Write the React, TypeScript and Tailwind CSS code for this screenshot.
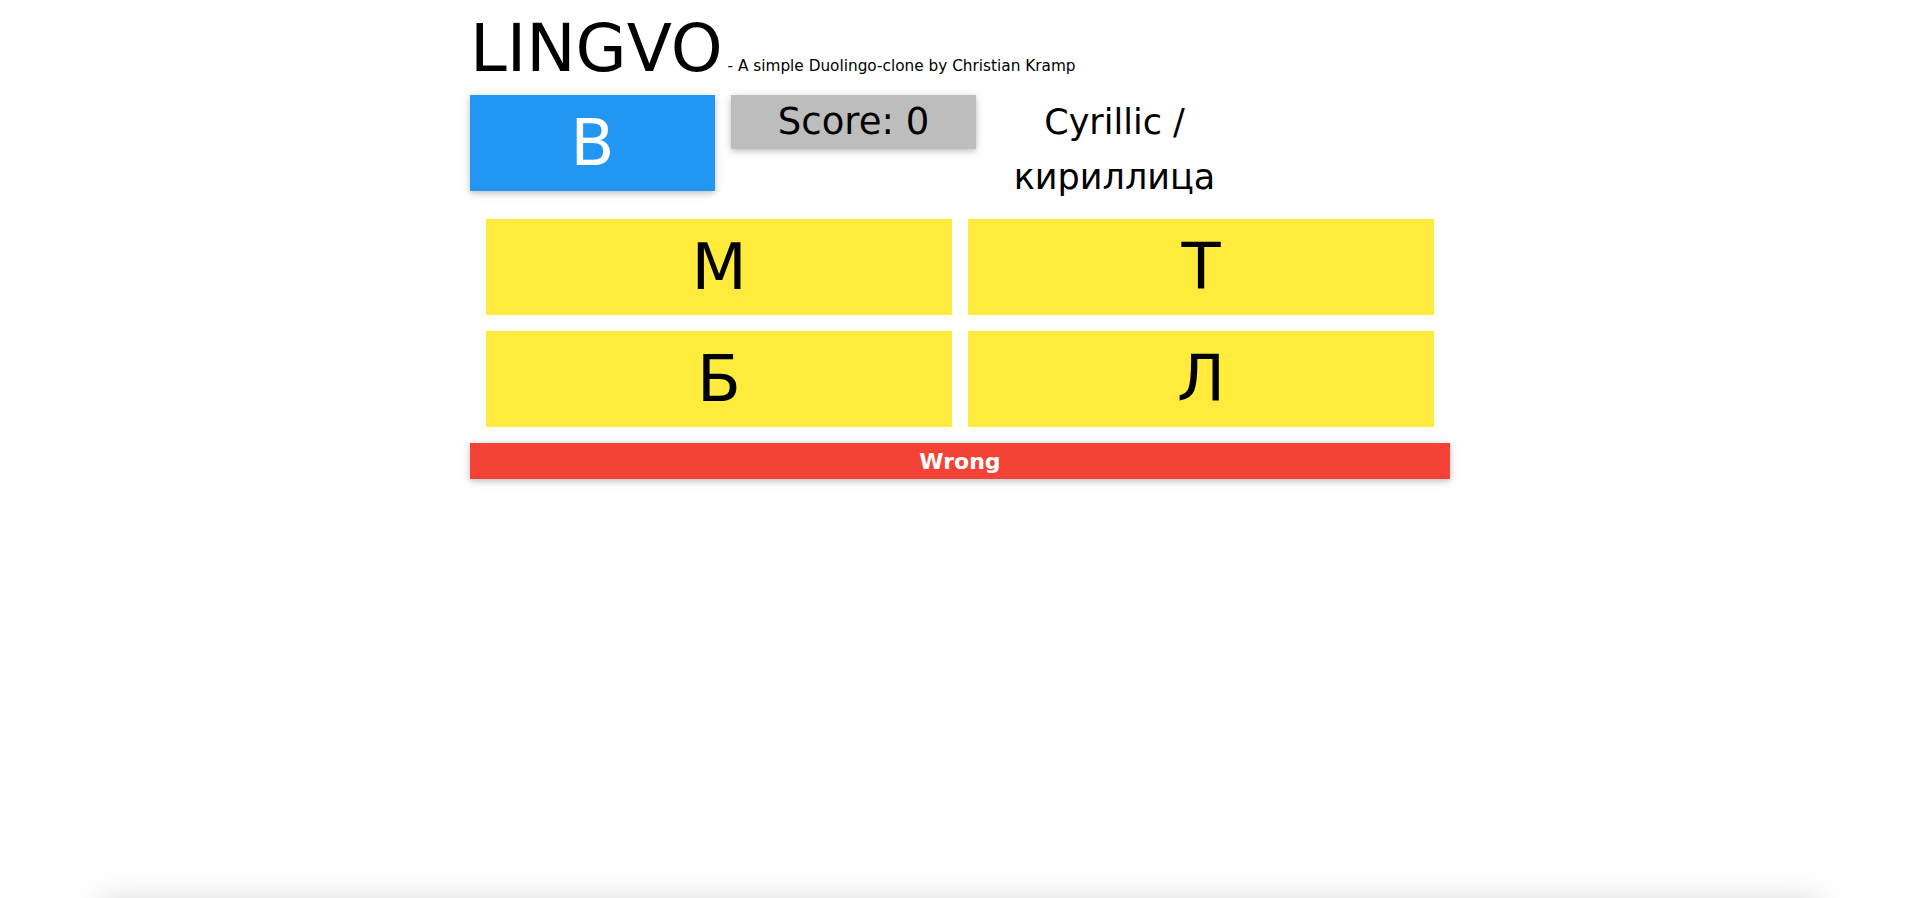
const answers = ['М', 'Т', 'Б', 'Л']

const cardShadow = 'shadow-[0_2px_5px_0_rgba(0,0,0,0.16),0_2px_10px_0_rgba(0,0,0,0.12)]'

export default function App() {
  return (
    <div className="bg-white text-black font-['DejaVu_Sans',Verdana,sans-serif]">
      <div className="h-[898px]">
        <div className="mx-auto w-[980px]">
          <h1 className="pt-[12px] text-[66px] leading-[74px] font-normal">
            LINGVO<span className="text-[15.3px] leading-none"> - A simple Duolingo-clone by Christian Kramp</span>
          </h1>

          <div className="mt-[9px] flex items-start gap-4">
            <div className={`flex h-24 w-[245px] items-center justify-center bg-[#2196f3] text-[64px] text-white ${cardShadow}`}>
              B
            </div>
            <div className={`flex h-[54px] w-[245px] items-center justify-center bg-[#bdbdbd] text-[37px] ${cardShadow}`}>
              Score: 0
            </div>
            <div className="w-[245px] text-center text-[35px] leading-[55px]">
              Cyrillic / кириллица
            </div>
          </div>

          <div className="mt-[14px] grid grid-cols-2 gap-4 px-4">
            {answers.map((a) => (
              <button
                key={a}
                className="flex h-24 items-center justify-center bg-[#ffeb3b] text-[64px]"
              >
                {a}
              </button>
            ))}
          </div>

          <div className={`mt-4 flex h-9 items-center justify-center bg-[#f44336] text-[22px] font-bold text-white ${cardShadow}`}>
            Wrong
          </div>
        </div>
      </div>
      <footer className="mx-[100px] h-16 bg-white shadow-[0_0_30px_0_rgba(0,0,0,0.14)]" />
    </div>
  )
}
